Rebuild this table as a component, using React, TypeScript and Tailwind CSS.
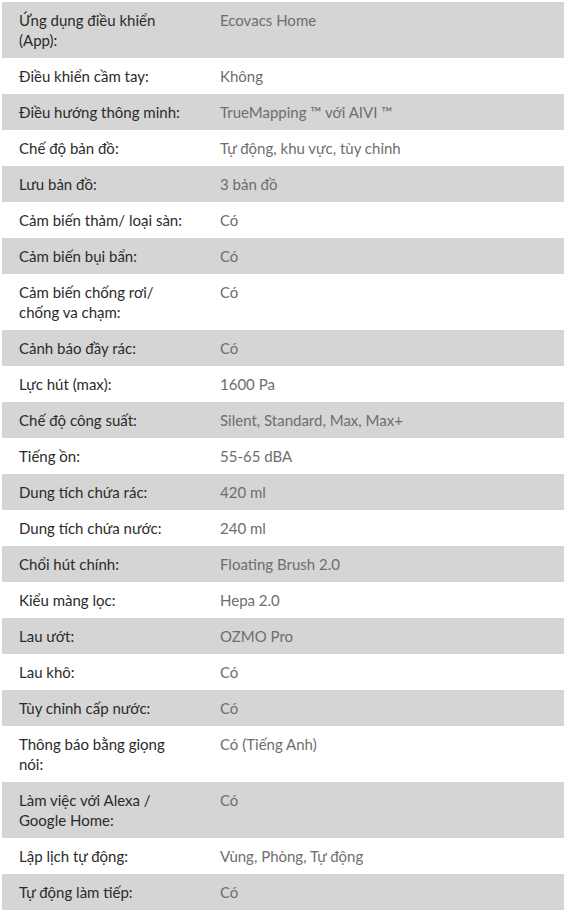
const rows: [string, string][] = [
  ["Ứng dụng điều khiển (App):", "Ecovacs Home"],
  ["Điều khiển cầm tay:", "Không"],
  ["Điều hướng thông minh:", "TrueMapping ™ với AIVI ™"],
  ["Chế độ bản đồ:", "Tự động, khu vực, tùy chỉnh"],
  ["Lưu bản đồ:", "3 bản đồ"],
  ["Cảm biến thảm/ loại sàn:", "Có"],
  ["Cảm biến bụi bẩn:", "Có"],
  ["Cảm biến chống rơi/ chống va chạm:", "Có"],
  ["Cảnh báo đầy rác:", "Có"],
  ["Lực hút (max):", "1600 Pa"],
  ["Chế độ công suất:", "Silent, Standard, Max, Max+"],
  ["Tiếng ồn:", "55-65 dBA"],
  ["Dung tích chứa rác:", "420 ml"],
  ["Dung tích chứa nước:", "240 ml"],
  ["Chổi hút chính:", "Floating Brush 2.0"],
  ["Kiểu màng lọc:", "Hepa 2.0"],
  ["Lau ướt:", "OZMO Pro"],
  ["Lau khô:", "Có"],
  ["Tùy chỉnh cấp nước:", "Có"],
  ["Thông báo bằng giọng nói:", "Có (Tiếng Anh)"],
  ["Làm việc với Alexa / Google Home:", "Có"],
  ["Lập lịch tự động:", "Vùng, Phòng, Tự động"],
  ["Tự động làm tiếp:", "Có"],
]

export default function App() {
  return (
    <main className="min-h-screen bg-white pt-[2px] px-[2px] font-['Lato','Noto_Sans',sans-serif] text-[15px] leading-5">
      <table className="w-full border-collapse">
        <tbody>
          {rows.map(([label, value], i) => (
            <tr key={label} className={i % 2 === 0 ? "bg-[#d5d5d5]" : "bg-white"}>
              <td className="w-[201px] pl-[17px] pr-4 py-2 align-top text-[#2b2b2b]">{label}</td>
              <td className="pl-[17px] pr-4 py-2 align-top text-[#6e6e6e]">{value}</td>
            </tr>
          ))}
        </tbody>
      </table>
    </main>
  )
}
